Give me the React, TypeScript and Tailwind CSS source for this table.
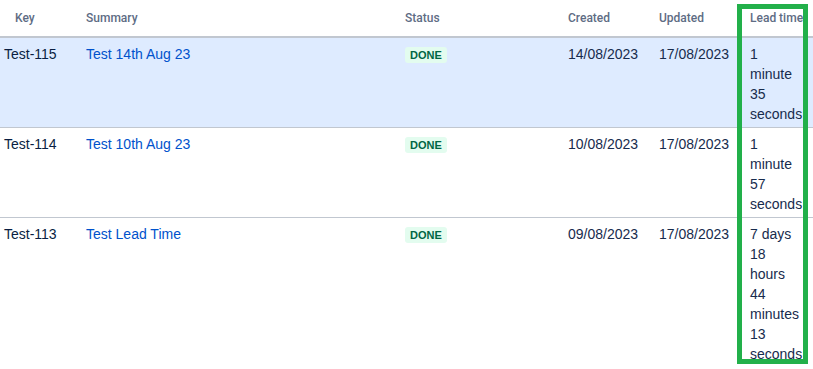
const rows = [
  {
    key: "Test-115",
    summary: "Test 14th Aug 23",
    created: "14/08/2023",
    updated: "17/08/2023",
    lead: ["1", "minute", "35", "seconds"],
    selected: true,
  },
  {
    key: "Test-114",
    summary: "Test 10th Aug 23",
    created: "10/08/2023",
    updated: "17/08/2023",
    lead: ["1", "minute", "57", "seconds"],
    selected: false,
  },
  {
    key: "Test-113",
    summary: "Test Lead Time",
    created: "09/08/2023",
    updated: "17/08/2023",
    lead: ["7 days", "18", "hours", "44", "minutes", "13", "seconds"],
    selected: false,
  },
];

const App = () => {
  return (
    <div
      className="relative w-[813px] h-[369px] overflow-hidden bg-white text-[14px] leading-[20px] text-[#172b4d]"
      style={{ fontFamily: '"Liberation Sans", Arial, sans-serif' }}
    >
      <div className="w-[840px]">
        <div className="flex h-[38px] items-center border-b-2 border-[#c1c7d0] font-['Roboto',sans-serif] text-[12px] font-medium text-[#5e6c84]">
          <div className="w-[86px] pl-[15px]">Key</div>
          <div className="w-[319px]">Summary</div>
          <div className="w-[163px]">Status</div>
          <div className="w-[91px]">Created</div>
          <div className="w-[91px]">Updated</div>
          <div className="flex-1 whitespace-nowrap">Lead time</div>
        </div>

        {rows.map((row, idx) => (
          <div
            key={row.key}
            className={
              row.selected
                ? "flex min-h-[90px] border-b border-[#c1c7d0] bg-[#deebff] pt-[6px] pb-[3px]"
                : idx === rows.length - 1
                  ? "flex min-h-[90px] bg-white pt-[6px] pb-[3px]"
                  : "flex min-h-[90px] border-b border-[#c1c7d0] bg-white pt-[6px] pb-[3px]"
            }
          >
            <div className="w-[86px] pl-[4px] text-[#091e42]">{row.key}</div>
            <div className="w-[319px] text-[#0052cc]">{row.summary}</div>
            <div className="w-[163px]">
              <span className="inline-flex h-[16px] items-center rounded-[3px] bg-[#e3fcef] px-[5px] text-[11px] font-bold text-[#006644]">
                DONE
              </span>
            </div>
            <div className="w-[91px]">{row.created}</div>
            <div className="w-[91px]">{row.updated}</div>
            <div className="flex-1">
              {row.lead.map((line, i) => (
                <div key={i}>{line}</div>
              ))}
            </div>
          </div>
        ))}
      </div>

      <div className="absolute left-[737px] top-[4px] h-[360px] w-[71px] border-[5px] border-[#22b04a]" />
    </div>
  );
};

export default App;
